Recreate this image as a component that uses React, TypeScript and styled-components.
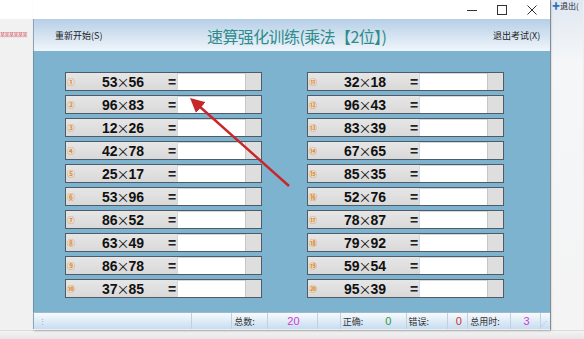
import React from 'react'
import styled, { createGlobalStyle } from 'styled-components'

const Global = createGlobalStyle`
    html, body {
        margin: 0;
        padding: 0;
        width: 584px;
        height: 339px;
        overflow: hidden;
        background: #eeeeee;
        font-family: "Noto Sans CJK SC", "Liberation Sans", sans-serif;
    }
`

const Desk = styled.div`
    display: flex;
    flex-direction: column;
    width: 584px;
    height: 339px;
`
const Top = styled.div`
    display: flex;
    height: 330px;
`
const Bottom = styled.div`
    flex: 1;
    background: linear-gradient(#f3f3f3, #e6e6e6);
    border-top: 1px solid #dcdcdc;
`
const LeftStrip = styled.div`
    width: 33px;
    display: flex;
    flex-direction: column;
    background: #f1f1f1;
    .white {
        height: 19px;
        background: #fff;
    }
    .red {
        margin-top: 12px;
        font-size: 5px;
        line-height: 6px;
        color: #d0303c;
        white-space: nowrap;
        letter-spacing: -0.5px;
    }
`
const RightStrip = styled.div`
    width: 33px;
    background: linear-gradient(#dfe7f0, #f4f6f8 60px, #f4f4f4);
    border-left: 1px solid #9aa8b6;
    font-size: 8px;
    color: #223;
    white-space: nowrap;
    padding: 1px 0 0 1px;
    line-height: 10px;
    box-sizing: border-box;
    span { color: #2b6fc4; }
`
const Window = styled.div`
    width: 517px;
    display: flex;
    flex-direction: column;
    box-shadow: 1px 1px 2px rgba(0,0,0,0.25);
    position: relative;
`
const TitleBar = styled.div`
    height: 19px;
    background: #fff;
    display: flex;
    justify-content: flex-end;
    align-items: center;
    padding-right: 3px;
`
const WinBtn = styled.div`
    width: 30px;
    height: 19px;
    display: flex;
    align-items: center;
    justify-content: center;
`
const Header = styled.div`
    height: 32px;
    background: linear-gradient(#b6cfe7, #f0f5fa);
    display: flex;
    align-items: center;
    border-left: 1px solid #8da4b8;
    padding: 1px 0 0 21px;
    box-sizing: border-box;
`
const LinkText = styled.div<{ $w: number }>`
    width: ${p => p.$w}px;
    font-size: 9px;
    color: #222;
    white-space: nowrap;
`
const Title = styled.div`
    font-size: 16px;
    color: #2e8c8c;
    letter-spacing: -0.6px;
    white-space: nowrap;
`
const Spacer = styled.div`
    flex: 1;
`
const Body = styled.div`
    height: 261px;
    background: #7eb3cf;
    box-sizing: border-box;
    padding: 21px 0 0 31px;
    display: flex;
    gap: 45px;
    position: relative;
    border-left: 1px solid #6b93ab;
`
const Column = styled.div`
    display: flex;
    flex-direction: column;
    gap: 4px;
`
const Row = styled.div`
    width: 197px;
    height: 19px;
    box-sizing: border-box;
    border: 1px solid #4f5b66;
    background: linear-gradient(#e6e6e6, #d9d9d9);
    display: flex;
    align-items: center;
`
const Num = styled.div`
    width: 12px;
    font-size: 8px;
    font-weight: bold;
    color: #e58a1f;
    padding-left: 1px;
    box-sizing: border-box;
`
const Expr = styled.div`
    width: 90px;
    text-align: center;
    font-family: "Liberation Sans", sans-serif;
    font-weight: bold;
    font-size: 14px;
    color: #111;
    white-space: nowrap;
    .x {
        font-family: "Noto Sans CJK SC", sans-serif;
        font-weight: 400;
        font-size: 13px;
        margin: 0 -1px;
    }
`
const Eq = styled.div`
    width: 9px;
    font-family: "Liberation Sans", sans-serif;
    font-size: 14px;
    font-weight: bold;
    color: #222;
`
const Answer = styled.div`
    width: 68px;
    height: 17px;
    background: #fff;
    box-shadow: inset 1px 1px 0 #d4d8dc;
`
const EndCell = styled.div`
    flex: 1;
    height: 17px;
    background: #dedede;
    border-left: 1px solid #c6c6c6;
`
const Status = styled.div`
    height: 17px;
    background: linear-gradient(#f7fafd, #c7ddf1);
    display: flex;
    align-items: center;
    border-left: 1px solid #8da4b8;
    border-top: 1px solid #9fb8cc;
    box-sizing: border-box;
`
const Seg = styled.div<{ $w: number; $c?: string }>`
    width: ${p => p.$w}px;
    height: 100%;
    display: flex;
    align-items: center;
    justify-content: ${p => (p.$c ? 'center' : 'flex-start')};
    border-right: 1px solid #bfd0e0;
    box-sizing: border-box;
    padding-left: 2px;
    font-size: ${p => (p.$c ? 11 : 9)}px;
    color: ${p => p.$c || '#333'};
    font-family: ${p => (p.$c ? '"Liberation Sans", sans-serif' : 'inherit')};
    white-space: nowrap;
    .ok {
        color: #2a9a3a;
        font-size: 11px;
        margin-left: 22px;
        font-family: "Liberation Sans", sans-serif;
    }
    .dots {
        color: #99a;
        font-size: 7px;
        margin-left: 3px;
    }
`
const Grip = styled.div`
    flex: 1;
    display: flex;
    justify-content: flex-end;
    align-items: flex-end;
    height: 100%;
    padding: 0 3px 2px 0;
    box-sizing: border-box;
    font-size: 6px;
    color: #9ab;
`
const ArrowSvg = styled.svg`
    position: absolute;
    left: 0;
    top: 0;
    pointer-events: none;
`

const left = ['53×56', '96×83', '12×26', '42×78', '25×17', '53×96', '86×52', '63×49', '86×78', '37×85']
const right = ['32×18', '96×43', '83×39', '67×65', '85×35', '52×76', '78×87', '79×92', '59×54', '95×39']
const circled = '①②③④⑤⑥⑦⑧⑨⑩⑪⑫⑬⑭⑮⑯⑰⑱⑲⑳'

const QuizRow = ({ n, expr }: { n: number; expr: string }) => {
    const [a, b] = expr.split('×')
    return <Row>
        <Num>{circled[n]}</Num>
        <Expr>{a}<span className='x'>×</span>{b}</Expr>
        <Eq>=</Eq>
        <Answer />
        <EndCell />
    </Row>
}

export default function App() {
    return <Desk>
        <Global />
        <Top>
            <LeftStrip>
                <div className='white' />
                <div className='red'>某某某某某某</div>
            </LeftStrip>
            <Window>
                <TitleBar>
                    <WinBtn>
                        <svg width='10' height='10'><line x1='0' y1='5.5' x2='10' y2='5.5' stroke='#333' strokeWidth='1' /></svg>
                    </WinBtn>
                    <WinBtn>
                        <svg width='10' height='10'><rect x='0.5' y='0.5' width='9' height='9' fill='none' stroke='#333' strokeWidth='1' /></svg>
                    </WinBtn>
                    <WinBtn>
                        <svg width='10' height='10'><path d='M0.5 0.5 L9.5 9.5 M9.5 0.5 L0.5 9.5' stroke='#333' strokeWidth='1' /></svg>
                    </WinBtn>
                </TitleBar>
                <Header>
                    <LinkText $w={152}>重新开始(S)</LinkText>
                    <Title>速算强化训练(乘法【2位】)</Title>
                    <Spacer />
                    <LinkText $w={57}>退出考试(X)</LinkText>
                </Header>
                <Body>
                    <Column>
                        {left.map((e, i) => <QuizRow key={i} n={i} expr={e} />)}
                    </Column>
                    <Column>
                        {right.map((e, i) => <QuizRow key={i} n={i + 10} expr={e} />)}
                    </Column>
                    <ArrowSvg width='517' height='261'>
                        <defs>
                            <marker id='ah' markerWidth='6' markerHeight='6' refX='1' refY='3' orient='auto'>
                                <path d='M0 0 L6 3 L0 6 Z' fill='#c8262b' />
                            </marker>
                        </defs>
                        <line x1='255' y1='135' x2='165' y2='55' stroke='#c8262b' strokeWidth='2.4' markerEnd='url(#ah)' />
                    </ArrowSvg>
                </Body>
                <Status>
                    <Seg $w={159}><span className='dots'>⋮</span></Seg>
                    <Seg $w={40} />
                    <Seg $w={36}>总数:</Seg>
                    <Seg $w={50} $c='#d03ad0'>20</Seg>
                    <Seg $w={23} />
                    <Seg $w={66}>正确:<span className='ok'>0</span></Seg>
                    <Seg $w={42}>错误:</Seg>
                    <Seg $w={20} $c='#d03030'>0</Seg>
                    <Seg $w={43}>总用时:</Seg>
                    <Seg $w={30} $c='#d03ad0'>3</Seg>
                    <Grip>⋰</Grip>
                </Status>
            </Window>
            <RightStrip><span>✚</span>退出(</RightStrip>
        </Top>
        <Bottom />
    </Desk>
}
